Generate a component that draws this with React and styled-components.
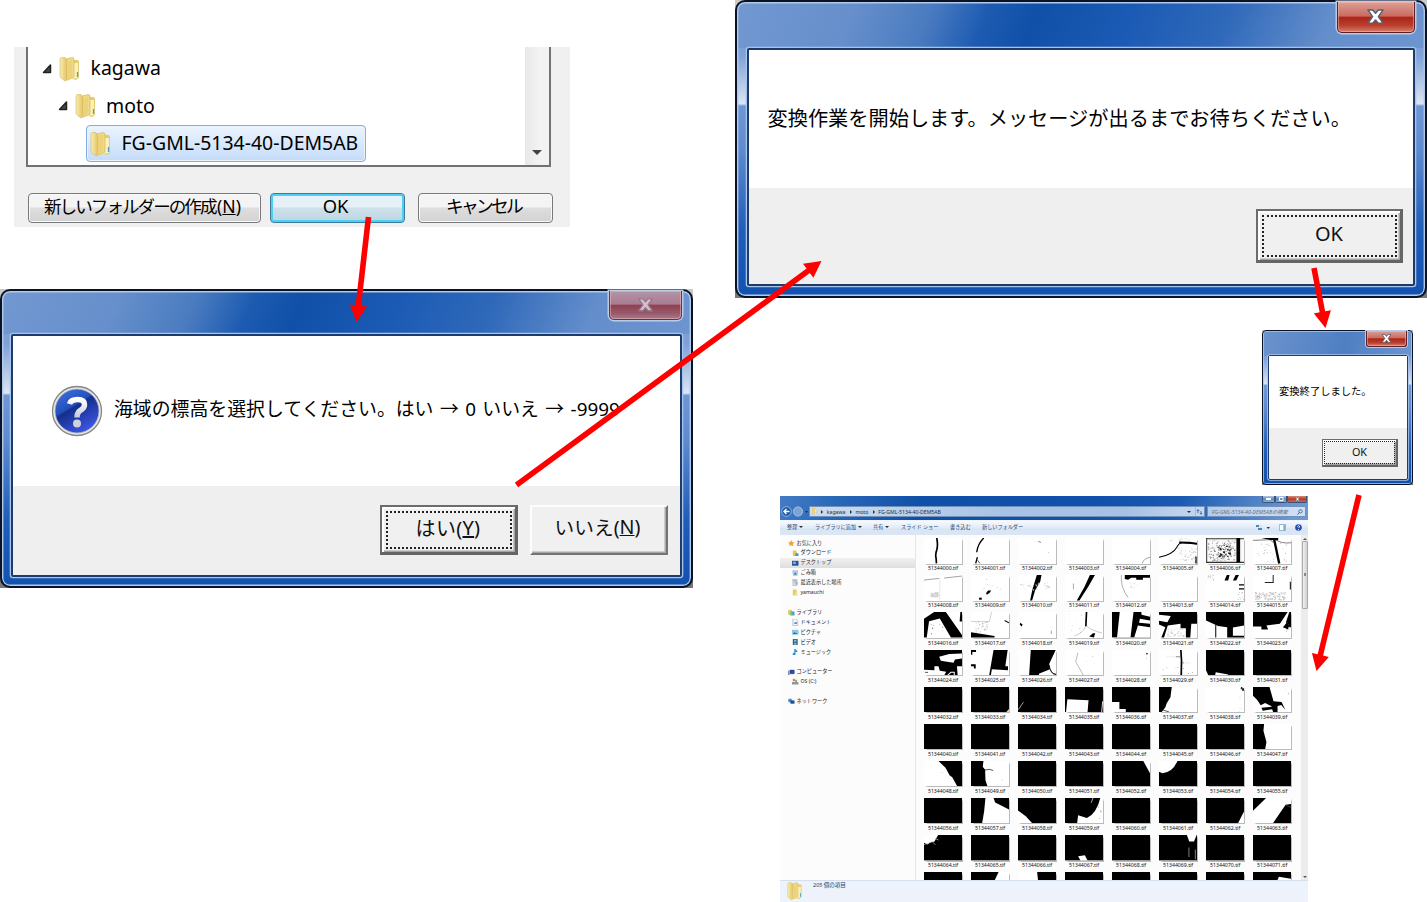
import React from "react";
import styled, { createGlobalStyle, css } from "styled-components";

const ui = `"Noto Sans", "Noto Sans CJK JP", sans-serif`;
const jp = `"Noto Sans CJK JP", sans-serif`;

const Global = createGlobalStyle`
  *, *::before, *::after { box-sizing: border-box; }
  html, body { margin: 0; background: #fff; }
  body { font-family: ${ui}; color: #000; overflow: hidden; }
`;

const Canvas = styled.main`
  position: relative;
  width: 1427px;
  height: 902px;
  overflow: hidden;
  background: #fff;
`;

/* ---------- folder picker ---------- */

const Picker = styled.section`
  position: absolute;
  left: 14px;
  top: 47px;
  width: 556px;
  height: 180px;
  padding-left: 12px;
  background: #f0f0f0;
`;

const Tree = styled.div`
  display: flex;
  width: 525px;
  height: 120px;
  border: 1.6px solid #6f7277;
  border-width: 0 2px 2px;
  background: #fff;
`;

const TreeRows = styled.div`
  flex: 1;
  padding-top: 3px;
`;

const TreeRow = styled.div`
  display: flex;
  align-items: center;
  width: max-content;
  height: 37.5px;
  margin-left: ${(p) => p.$indent}px;
  font-size: 19.45px;
  line-height: 36px;
  white-space: pre;
`;

const SelectedRow = styled(TreeRow)`
  width: 280px;
  height: 37px;
  padding-left: 3px;
  border: 1.5px solid #84ace0;
  border-radius: 4px;
  background: linear-gradient(#ecf4fe, #c4dcfa);
  box-shadow: inset 0 0 0 1px #e9f2fd;
`;

const RowLabel = styled.span`
  margin-left: ${(p) => p.$gap}px;
  margin-top: -1px;
`;

const RowIcon = styled.span`
  display: flex;
  margin-left: 6px;
`;

const TreeScroll = styled.div`
  display: flex;
  align-items: flex-end;
  justify-content: center;
  width: 24px;
  padding-bottom: 10px;
  background: linear-gradient(90deg, #e8e8e8, #f3f3f3 60%);
`;

const PickerButtons = styled.div`
  display: flex;
  padding: 26px 0 0 2px;
`;

const PickerButton = styled.button`
  display: flex;
  align-items: center;
  justify-content: center;
  width: ${(p) => p.$w}px;
  height: 29.5px;
  margin-right: ${(p) => p.$after || 0}px;
  padding: 0 4px 3px 0;
  border: 1.6px solid #77797c;
  border-radius: 4px;
  background: linear-gradient(#f4f4f4 0 46%, #dedede 50%, #d2d2d2);
  box-shadow: inset 0 0 0 1px #fafafa;
  font: ${(p) => p.$size || 18}px ${ui};
  line-height: 20px;
  letter-spacing: ${(p) => p.$track || 0}px;
  white-space: nowrap;
  color: #000;
  ${(p) =>
    p.$primary &&
    css`
      border-color: #3d7a9c;
      background: linear-gradient(#e6f1f7 0 46%, #cfe1ea 50%, #bcd6e3);
      box-shadow: inset 0 0 0 2px #4ed0f5;
    `}
`;

const AccessKey = styled.span`
  margin-left: 1.5px;
  letter-spacing: 0;
`;

/* ---------- message windows ---------- */

const Backdrop = styled.section`
  position: absolute;
  left: ${(p) => p.$x}px;
  top: ${(p) => p.$y}px;
  width: ${(p) => p.$w}px;
  height: ${(p) => p.$h}px;
  background: linear-gradient(#c9cccb, #777 50%);
`;

const Frame = styled.div`
  display: flex;
  flex-direction: column;
  width: 100%;
  height: 100%;
  padding: 0 ${(p) => p.$pad}px ${(p) => p.$pad}px;
  border: ${(p) => (p.$small ? 1 : 2)}px solid #0a1326;
  border-radius: ${(p) => (p.$small ? 4 : 10)}px;
  box-shadow: inset 0 0 0 ${(p) => (p.$small ? 0.8 : 1.4)}px #b3c9ea;
  background:
    ${(p) =>
      p.$small
        ? "linear-gradient(105deg, #6c93cd, #4f7fc2 55%, #6d95cf)"
        : "linear-gradient(112deg, #7298d1 0, #668fcb 17%, #4a7bc0 28%, #1d5bb1 36%, #1050a8 43%, #1c5bb5 57%, #2e68b9 70%, #648ecb 85%, #6d95d0)"}
      top / 100% ${(p) => p.$head}px no-repeat,
    linear-gradient(#7199d4 0, #7ea1d8 18%, #dbe5f5 34.6%, #6f97d6 35.4%, #5f8bd0 50%, #1e5db8 78%, #1251ae);
`;

const Header = styled.header`
  display: flex;
  justify-content: flex-end;
  height: ${(p) => p.$h}px;
`;

const CloseButton = styled.div`
  display: flex;
  align-items: center;
  justify-content: center;
  width: ${(p) => p.$w}px;
  height: ${(p) => p.$h}px;
  margin-right: ${(p) => p.$shift || 0}px;
  border: ${(p) => p.$line || 1.5}px solid #5d1e24;
  border-top: 0;
  border-radius: 0 0 ${(p) => p.$r}px ${(p) => p.$r}px;
  box-shadow: 0 0 0 ${(p) => p.$line || 1.5}px #b9cbe6, inset 0 0 0 1px rgba(255, 200, 190, 0.45);
  background: linear-gradient(#dca096, #c96c60 46%, #ad2416 52%, #b8402f 78%, #d77e6b);
  ${(p) =>
    p.$faded &&
    css`
      border-color: #5f3848;
      background: linear-gradient(#b493a6, #aa7d92 46%, #90404f 52%, #97586a 78%, #a87a8e);
    `}
`;

const Client = styled.div`
  display: flex;
  flex: 1;
  flex-direction: column;
  border: ${(p) => (p.$small ? 1 : 2)}px solid #1d3c6c;
  border-radius: 2px;
  box-shadow: 0 0 0 ${(p) => (p.$small ? 0.8 : 1.3)}px #a9c4ea;
  background: #efefef;
`;

const Body = styled.div`
  display: flex;
  align-items: center;
  height: ${(p) => p.$h}px;
  padding-left: ${(p) => p.$left}px;
  background: #fff;
`;

const Message = styled.p`
  margin: ${(p) => p.$top || 0}px 0 0 ${(p) => p.$left || 0}px;
  font-family: ${(p) => (p.$mixed ? ui : jp)};
  font-size: ${(p) => p.$size}px;
  line-height: 1.4;
  word-spacing: ${(p) => (p.$mixed ? 1.5 : 0)}px;
  white-space: pre;
`;

const Footer = styled.footer`
  display: flex;
  justify-content: flex-end;
  gap: 12px;
  padding: ${(p) => p.$pad};
`;

const ClassicButton = styled.button`
  display: flex;
  width: ${(p) => p.$w}px;
  height: ${(p) => p.$h}px;
  padding: ${(p) => (p.$small ? 1 : 3.5)}px;
  border-style: solid;
  border-width: ${(p) => (p.$small ? "1px 2px 2px 1px" : p.$focus ? "2px 3.5px 3.5px 2px" : "2px 2.5px 2.5px 2px")};
  border-color: ${(p) => (p.$focus ? "#6c6c6c #656565 #656565 #6c6c6c" : "#fdfdfd #747474 #747474 #fdfdfd")};
  background: #f0f0f0;
  box-shadow: ${(p) => (p.$focus ? "inset 2px 2px 0 #fff, inset -1.5px -1.5px 0 #a3a3a3" : "inset -1.5px -1.5px 0 #a8a8a8")};
  font: ${(p) => p.$size}px ${ui};
  letter-spacing: ${(p) => p.$track || 0}px;
  color: #111;
`;

const Focus = styled.span`
  display: flex;
  flex: 1;
  align-items: center;
  justify-content: center;
  align-self: stretch;
  padding: 0 ${(p) => p.$nudge || 0}px ${(p) => p.$lift}px 0;
  border: ${(p) => (p.$on ? (p.$small ? "1px" : "2px") : "0")} dotted #222;
  white-space: nowrap;
`;

/* ---------- explorer ---------- */

const Explorer = styled.section`
  position: absolute;
  left: 780px;
  top: 496px;
  display: flex;
  flex-direction: column;
  width: 528px;
  height: 406px;
  overflow: hidden;
  background: #fcfcfc;
`;

const ExplorerTop = styled.header`
  height: 23.5px;
  background: linear-gradient(108deg, #447cc3 0, #2a69b8 10%, #0f4fa7 27%, #1151aa 60%, #1a5ab3 75%, #6f98d0 97%);
`;

const WindowButtons = styled.div`
  display: flex;
  justify-content: flex-end;
  height: 9.5px;
  padding-right: 1px;
`;

const WindowButton = styled.span`
  display: flex;
  align-items: center;
  justify-content: center;
  width: ${(p) => p.$w}px;
  height: 7px;
  border: 0.5px solid #39537a;
  border-top: 0;
  border-radius: 0 0 2px 2px;
  background: ${(p) =>
    p.$red ? "linear-gradient(#d68d80, #b83a28 50%, #c86552)" : "linear-gradient(#b4c9e6, #5f86be 50%, #8faedb)"};
`;

const AddressRow = styled.div`
  display: flex;
  align-items: center;
  height: 12px;
  padding-left: 1px;
`;

const NavIcons = styled.div`
  display: flex;
  align-items: center;
  width: 28px;
`;

const AddressBar = styled.div`
  display: flex;
  align-items: center;
  width: 396px;
  height: 10.5px;
  border: 0.6px solid #7191bd;
  background: linear-gradient(90deg, #cddcf0, #a7c2e6 50%, #a6c1e5 80%, #c6d8ef);
  font-size: 5.15px;
  line-height: 8px;
  color: #1c2b44;
`;

const Crumb = styled.span`
  margin-left: ${(p) => p.$gap}px;
  white-space: nowrap;
`;

const Tri = styled.i`
  width: 0;
  height: 0;
  margin-left: ${(p) => p.$gap || 0}px;
  border: ${(p) => p.$s || 2}px solid transparent;
  ${(p) =>
    p.$down
      ? css`border-top-color: ${p.$c || "#233"}; border-bottom: 0;`
      : p.$up
      ? css`border-bottom-color: ${p.$c || "#233"}; border-top: 0;`
      : css`border-left-color: #233; border-right: 0;`}
`;

const AddressTail = styled.div`
  display: flex;
  align-items: center;
  gap: 4px;
  margin-left: auto;
  padding-right: 1px;
`;

const SearchBox = styled.div`
  display: flex;
  align-items: center;
  justify-content: space-between;
  width: 99px;
  height: 10.5px;
  margin-left: 2px;
  padding: 0 2px 0 4px;
  border: 0.6px solid #6f91bf;
  background: linear-gradient(90deg, #b4cbe9, #d2e0f3);
  font-size: 5.25px;
  font-style: italic;
  line-height: 8px;
  color: #5e7187;
  white-space: nowrap;
`;

const Toolbar = styled.nav`
  display: flex;
  align-items: center;
  height: 15px;
  padding-left: 7px;
  padding-bottom: 1px;
  border-top: 1px solid #eff5fd;
  background: linear-gradient(#f7fafe, #e3ecf8 45%, #d9e5f4 55%, #dbe6f5);
  font-size: 5.15px;
  color: #26456f;
`;

const ToolItem = styled.span`
  display: flex;
  align-items: center;
  gap: 2px;
  width: ${(p) => p.$w}px;
  line-height: 8px;
  white-space: pre;
`;

const ToolIcons = styled.div`
  display: flex;
  align-items: center;
  margin-left: auto;
  padding-right: 6px;
  gap: 9px;
`;

const ExplorerBody = styled.div`
  display: flex;
  flex: 1;
  min-height: 0;
`;

const Sidebar = styled.aside`
  width: 135.5px;
  padding-top: 3.6px;
  border-right: 1px solid #dde8f6;
`;

const SideItem = styled.div`
  display: flex;
  align-items: center;
  gap: 2px;
  height: 9.92px;
  padding-left: ${(p) => (p.$child ? 12 : 8)}px;
  font-size: 5.15px;
  line-height: 9px;
  color: #1d1d26;
  white-space: nowrap;
  background: ${(p) => (p.$active ? "linear-gradient(#f1f1f1, #dedede)" : "none")};
`;

const Files = styled.div`
  display: grid;
  flex: 1;
  grid-template-columns: repeat(8, 47.02px);
  grid-auto-rows: 37.13px;
  align-content: start;
  padding: 3.7px 0 0 4px;
  overflow: hidden;
`;

const FileCell = styled.figure`
  display: flex;
  flex-direction: column;
  align-items: center;
  margin: 0;
`;

const Picture = styled.svg`
  display: block;
  width: 38px;
  height: 25.4px;
  flex: none;
  background: #fff;
  box-shadow: 0.5px 0.5px 1px #bbb;
`;

const Caption = styled.figcaption`
  margin-top: 0.7px;
  font-size: 5.2px;
  line-height: 8px;
  color: #111;
`;

const Scrollbar = styled.div`
  display: flex;
  flex-direction: column;
  align-items: center;
  width: 7px;
  padding: 3px 0 2px;
  background: #ececec;
`;

const Thumb = styled.div`
  display: flex;
  align-items: center;
  justify-content: center;
  width: 6px;
  height: 68px;
  margin: 1px 0 auto;
  border: 0.6px solid #a9a9a9;
  border-radius: 1px;
  background: linear-gradient(90deg, #f3f3f3, #cfcfcf);
`;

const Grip = styled.i`
  width: 2px;
  height: 3px;
  background: #888;
`;

const StatusBar = styled.footer`
  display: flex;
  height: 22px;
  padding: 0 0 0 7px;
  border-top: 1px solid #d5e0ef;
  background: #edf2fb;
  font-size: 5.5px;
  line-height: 9px;
  color: #26415f;
`;

const StatusText = styled.span`
  margin-left: 10px;
`;

/* ---------- drawings ---------- */

const Arrows = styled.svg`
  position: absolute;
  inset: 0;
  pointer-events: none;
`;

const Folder = ({ w = 22, h = 26 }) => (
  <svg width={w} height={h} viewBox="0 0 22 26">
    <defs>
      <linearGradient id="fo" x1="0" x2="1">
        <stop offset="0" stopColor="#f9efb4" />
        <stop offset="1" stopColor="#e2c260" />
      </linearGradient>
    </defs>
    <path d="M10 4 L18 4 Q20 4 20 6 V22 L17 24 L9 22Z" fill="#e6cc70" />
    <path d="M12 7 H19 V22 L12 23Z" fill="#faf1bd" />
    <path d="M18.500 16 V21" stroke="#46a6c8" strokeWidth="1.3" />
    <path d="M7 3 L13 1.500 Q15 1.500 15 3 V21 L9 24Z" fill="#efda8a" stroke="#d2b24e" strokeWidth=".6" />
    <path d="M1 3 Q1 1.500 3 1.500 H6 L8 5 V22 Q8 25 6 25 L2 22 Q1 21 1 20Z" fill="url(#fo)" stroke="#d5b75c" strokeWidth=".6" />
    <path d="M8 6 L13 3 V21 L8 25Z" fill="#ecd37a" />
  </svg>
);

const Expander = () => (
  <svg width="12" height="12" viewBox="0 0 12 12">
    <path d="M9.500 2 V9.500 H2.500Z" fill="#484848" stroke="#202020" strokeWidth="1.5" strokeLinejoin="round" />
  </svg>
);

const CloseMark = ({ w, faded }) => (
  <svg width={w} height={w * 0.8} viewBox="0 0 20 16">
    <path
      d="M2 1 H7 L10 4.500 L13 1 H18 L13 8 L18 15 H13 L10 11.500 L7 15 H2 L7 8Z"
      fill={faded ? "#d8bec8" : "#fff"}
      stroke={faded ? "#93788d" : "#57606f"}
      strokeWidth="1.5"
      strokeLinejoin="round"
    />
  </svg>
);

const QuestionIcon = () => (
  <svg width="52" height="52" viewBox="0 0 52 52">
    <defs>
      <linearGradient id="qb" x1="0" y1="0" x2=".6" y2="1">
        <stop offset="0" stopColor="#3f76e2" />
        <stop offset=".45" stopColor="#2450bd" />
        <stop offset=".5" stopColor="#132f8c" />
        <stop offset="1" stopColor="#3c55e0" />
      </linearGradient>
      <linearGradient id="qw" x1="0" y1="0" x2="0" y2="1">
        <stop offset="0" stopColor="#fff" />
        <stop offset="1" stopColor="#c8cbd8" />
      </linearGradient>
    </defs>
    <circle cx="26" cy="26" r="24.500" fill="#e9e9ea" stroke="#858585" strokeWidth="1.300" />
    <circle cx="26" cy="26" r="22" fill="url(#qb)" stroke="#b3b5bb" strokeWidth=".8" />
    <path d="M18.500 19 Q20 14.500 26.500 14.500 Q33.500 14.500 33.500 19.500 Q33.500 23 30 25 Q26 27 26 32.500" fill="none" stroke="url(#qw)" strokeWidth="5.500" />
    <circle cx="26" cy="38.500" r="4" fill="#cfd2de" />
  </svg>
);

const SmallIcon = ({ kind }) => {
  const art = {
    star: <path d="M4 0 L5.200 2.600 L8 3 L6 5 L6.500 8 L4 6.500 L1.500 8 L2 5 L0 3 L2.800 2.600Z" fill="#f2a33a" />,
    folder: <><path d="M1 .5 H5 L6 2 V8 H1Z" fill="#e9cc62" /><path d="M5 3 H7 V8 H4Z" fill="#f7e7a2" /></>,
    down: <><path d="M1 .5 H5 L6 2 V8 H1Z" fill="#e5c75e" /><path d="M4 4 H8 V8 H4Z" fill="#3f9bd6" /></>,
    desktop: <><path d="M0 1 H8 V7 H0Z" fill="#28528f" /><path d="M1 2 H5 V5 H1Z" fill="#68aaf0" /></>,
    bin: <><path d="M1 1 H7 L6 8 H2Z" fill="#c5dbea" stroke="#6d91aa" strokeWidth=".6" /><circle cx="4" cy="4.500" r="1.500" fill="#3986cf" /></>,
    recent: <><path d="M1 0 H6 V8 H1Z" fill="#d3dfe9" stroke="#8195a8" strokeWidth=".5" /><path d="M2 2 H5 M3 4 H7 M4 6 H7.500" stroke="#7391a6" strokeWidth=".8" /></>,
    library: <><path d="M0 1 H5 V7 H0Z" fill="#e6cf69" /><path d="M3 3 H8 V8 H3Z" fill="#4da4ca" /><path d="M2 4 H5 V7 H2Z" fill="#94c45c" /></>,
    doc: <><path d="M1 0 H5 L7 2 V8 H1Z" fill="#f2f5f9" stroke="#8798ad" strokeWidth=".6" /><path d="M3 4 H6 V6 H3Z" fill="#4977ad" /></>,
    picture: <><path d="M0 1 H8 V7 H0Z" fill="#8cc6ea" /><path d="M1 6 L3 4 L7 6Z" fill="#276986" /></>,
    video: <><path d="M1 0 H7 V8 H1Z" fill="#345e7b" /><path d="M2.500 1 H5.500 V3.500 H2.500Z M2.500 4.500 H5.500 V7 H2.500Z" fill="#7bb9db" /></>,
    music: <><path d="M3.500 6 V0 Q4 2 6.500 3" fill="none" stroke="#2d8ed6" strokeWidth="1.400" /><circle cx="2.500" cy="6.300" r="1.700" fill="#2d8ed6" /></>,
    computer: <><path d="M2 1 H8 V6 H2Z" fill="#2548a1" /><path d="M0 2 H2 V8 H0Z M3 7 H7 V8 H3Z" fill="#8190a4" /></>,
    drive: <><path d="M0 5 H8 V8 H0Z" fill="#8b969b" /><path d="M1 1 H3.500 V4 H1Z" fill="#d97838" /><path d="M4 2 H6 V5 H4Z" fill="#63a344" /></>,
    network: <><circle cx="2.500" cy="3" r="2.400" fill="#339dc2" /><path d="M3 3 H8 V7 H3Z" fill="#28459d" /></>,
  };
  return <svg width="6.500" height="6.500" viewBox="0 0 8 8">{art[kind]}</svg>;
};

const dots = (seed, n, x0, y0, w, h, shade = "#888", size = 2) => {
  let s = seed * 7919;
  const rnd = () => {
    s = (s * 16807) % 2147483647;
    return s / 2147483647;
  };
  let d = "";
  for (let i = 0; i < n; i++) {
    const x = x0 + rnd() * w;
    const y = y0 + rnd() * h;
    const k = size * (0.5 + rnd());
    d += `M${x.toFixed(1)} ${y.toFixed(1)}h${k.toFixed(1)}v${(k * 0.8).toFixed(1)}h-${k.toFixed(1)}z`;
  }
  return { f: shade, d };
};

const K = "#000";
const W = "#fff";
const fill = (d, f = K) => ({ f, d });
const line = (d, w = 2, s = K) => ({ s, w, d });

/* Terrain previews on a 113 x 75 grid; tiles that are missing here are solid black. */
const tiles = {
  0: [W, line("M38 0 Q42 22 38 35 Q33 48 36 60 L37 75", 5)],
  1: [W, line("M38 0 Q20 17 17 42", 4), line("M19 57 L14 75", 4), line("M20 66 L26 75", 2)],
  2: [W, line("M60 10 L68 13", 3, "#888"), dots(9, 2, 85, 35, 8, 8, "#bbb")],
  3: [W],
  4: [W, line("M90 75 Q94 60 113 57", 2, "#777")],
  5: [W, line("M0 57 Q42 48 53 27 Q62 10 76 14 L113 17", 3), line("M60 13 L90 14 L113 17", 6), line("M110 55 V75", 4), dots(55, 60, 55, 25, 55, 48, "#aaa"), dots(56, 25, 30, 0, 60, 8, "#ccc")],
  6: ["#fafafa", line("M2 0 V72 M0 2 H113 M0 72 H113", 3, "#333"), line("M96 0 V72", 11), dots(61, 150, 5, 6, 82, 62, "#999", 3), dots(63, 28, 33, 20, 42, 34, "#222", 4), dots(64, 30, 5, 6, 82, 62, "#555", 2.500)],
  7: [W, line("M62 0 L78 75", 7), line("M0 7 L50 5 L64 15 M64 3 Q85 18 113 14", 2, "#444"), fill("M25 0 H75 V7 L52 6Z"), dots(71, 28, 5, 15, 95, 55, "#999")],
  8: [W, line("M0 15 L45 10 M60 9 L113 3", 2, "#777"), line("M47 10 V75", 1, "#bbb"), dots(81, 45, 18, 50, 25, 16, "#ccc", 3)],
  9: [W, fill("M45 53 L51 46 L60 46 L55 53 L47 58Z"), fill("M24 67 H32 V73 H24Z"), dots(91, 9, 5, 5, 100, 50, "#999")],
  10: [W, fill("M56 0 H70 L66 20 L51 45 L42 75 H36 L43 42Z"), dots(101, 30, 5, 20, 90, 25, "#ccc", 3)],
  11: [W, fill("M74 0 H89 L70 33 L43 75 H35 L58 35Z"), line("M25 25 V42", 3, "#aaa")],
  12: [W, fill("M38 0 H113 V8 H92 V14 H72 V8 H57 L48 14 L38 12Z"), line("M28 0 Q24 35 48 67", 2, "#888"), dots(121, 12, 50, 22, 30, 15, "#aaa")],
  13: [W],
  14: [W, fill("M62 0 H70 L66 16 H55Z M88 0 H98 L90 16 H80Z"), line("M98 29 H113 M98 41 H113", 4), dots(141, 16, 3, 0, 18, 14, "#777"), dots(143, 18, 92, 50, 20, 22, "#aaa")],
  15: [W, line("M60 0 V22 H35", 3, "#222"), dots(151, 120, 5, 50, 90, 22, "#bbb", 3), line("M111 20 V43", 3)],
  16: [W, fill("M0 20 L30 0 H65 L113 68 V75 H80 L47 19 L15 27 L8 75 H0Z"), fill("M108 0 H113 V28 H106Z"), dots(161, 8, 20, 35, 35, 30, "#333")],
  17: [W, fill("M0 60 L70 71 V75 H0Z"), line("M0 28 H55 L61 0", 2, "#bbb"), line("M100 25 L113 32", 3), dots(171, 35, 12, 28, 35, 30, "#bbb", 3)],
  18: [W, fill("M7 32 L14 38 L10 43 L5 36Z"), line("M99 55 V65", 3, "#aaa")],
  19: [W, line("M64 0 L62 42", 5), line("M62 42 Q50 65 28 70 M64 42 Q80 55 110 62", 1.5, "#999"), fill("M72 72 L83 63 H90 L86 75Z"), dots(191, 9, 5, 5, 45, 60, "#aaa")],
  20: [K, fill("M23 0 H64 L55 75 H15Z", W), fill("M87 0 H113 V14 L88 8Z M83 20 L113 25 V75 H66 L77 40 L113 45 V36 L80 34Z", W), line("M85 15 L113 21 M80 34 L113 37", 5)],
  21: [W, fill("M0 0 H113 V35 H96 L93 75 H80 V48 H64 V35 L26 40 L15 75 H7 L19 45 L0 37 V26 L25 30 L35 12 L0 8Z"), fill("M0 12 H30 L24 28 L0 24Z", W), dots(211, 40, 22, 48, 50, 24, "#ccc", 3)],
  22: [W, fill("M0 0 H113 V40 L80 46 V70 H113 V75 H63 V45 L36 41 L0 25Z"), line("M29 38 V75", 3)],
  23: [W, fill("M0 0 H103 L80 35 L40 40 L45 52 H25 V43 H0Z"), fill("M108 0 H113 V45 H104 L98 30Z M89 45 L105 26 V52Z"), dots(231, 6, 95, 25, 15, 43, "#555")],
  24: [K, fill("M45 20 L75 12 L113 10 V25 L92 28 L88 38 L50 32Z M0 58 L31 60 V48 H43 L47 61 L66 64 L60 75 H0Z M98 48 H113 V75 H100Z", W), line("M70 75 L80 66 H90 V75", 3, W), line("M3 66 H12", 2)],
  25: [W, fill("M67 0 H109 L102 48 L110 48 V60 L62 57 L59 75 H54Z"), fill("M0 0 H15 V6 H4 V14 H0Z M0 42 H14 V55 H9 L8 48 H0Z")],
  26: [W, fill("M38 0 H112 L92 43 L95 57 L62 70 V75 H33Z"), line("M92 43 Q97 72 113 72", 3)],
  27: [W, line("M38 8 L32 35 L55 75", 2, "#999"), dots(271, 6, 5, 0, 100, 73, "#bbb")],
  28: [W, fill("M101 8 L107 10 L104 15Z"), dots(281, 2, 100, 22, 5, 9, "#999")],
  29: [W, line("M65 0 L67 32 L66 75", 5), line("M50 20 H65 M68 38 H74", 2, "#555"), line("M22 20 H50 M74 38 H95", 1.5, "#ddd"), dots(291, 10, 8, 48, 95, 20, "#999")],
  30: [K, fill("M27 75 L29 66 L66 72 V75Z M0 60 L7 75 H0Z", W)],
  33: [K, fill("M104 75 L113 65 V75Z", "#ddd")],
  34: [K, line("M1 67 L16 45", 2, "#eee")],
  35: [K, fill("M7 36 L70 39 L67 75 H3Z", W), line("M112 42 L109 75", 3, "#ddd")],
  36: [K, fill("M0 44 H22 V65 H41 V75 H0Z", W)],
  37: [W, fill("M0 0 H38 L34 30 L23 48 L19 60 L7 75 H0Z"), line("M10 67 L30 74", 2)],
  38: [W, fill("M104 0 H108 V4 H113 V11 H107 V7 H103Z", "#222"), dots(381, 6, 98, 20, 12, 53, "#aaa")],
  39: [W, fill("M0 0 H49 L61 42 L85 44 L96 67 L84 53 L73 56 V75 H60 L57 66 L29 70 L25 61 L57 58 L36 47 L23 54 L12 38 L0 26Z"), dots(391, 4, 90, 0, 20, 30, "#aaa")],
  47: [W, fill("M0 0 H33 L31 20 L40 53 L36 75 H0Z")],
  48: [W, fill("M43 0 H113 V75 H99 L84 48 L76 42 L64 20Z"), dots(481, 2, 50, 32, 6, 4, "#999")],
  49: [W, fill("M0 0 H37 L35 17 L42 26 L43 57 L49 75 H0Z"), line("M39 27 Q57 22 66 28", 2), dots(491, 1, 90, 55, 3, 3, "#777")],
  52: [K, fill("M93 0 H113 V36 L102 16Z", W)],
  53: [K, fill("M0 0 H55 Q40 34 10 36 L0 32Z", W)],
  57: [K, fill("M43 0 H67 L72 13 L113 34 V75 H33 L39 40Z", W)],
  58: [K, fill("M0 37 L23 54 L43 75 H0Z", W)],
  59: [K, fill("M105 0 H113 V75 H36 L39 51 L65 59 Q93 48 105 0Z", W), line("M83 0 L78 14", 2, W), dots(591, 4, 95, 15, 12, 55, "#333")],
  62: [K, fill("M113 40 V75 H95Z", W)],
  63: [K, fill("M39 0 H113 V18 L97 20 L59 75 H0 V38Z", W), line("M98 21 L113 28", 2, "#555")],
  64: [K, fill("M0 0 H42 L31 19 L17 23 L10 28 L0 23Z", W), line("M0 28 L20 22 M23 18 L34 29 M32 10 L44 15", 2, "#bbb")],
  67: [K, fill("M39 63 L59 60 L67 75 H46Z", W)],
  69: [K, fill("M83 0 H112 L104 19 H90Z", W), line("M89 37 V65 M108 43 V72", 2, "#bbb")],
  73: [K, fill("M82 0 H113 V30 H68Z", W)],
  74: [K, fill("M0 0 H57 L60 30 H0Z", W)],
  79: [K, fill("M77 14 L113 20 V30 H70Z", W)],
};

const Tile = ({ n }) => {
  const [bg, ...shapes] = tiles[n] || [K];
  return (
    <Picture viewBox="0 0 113 75" preserveAspectRatio="none">
      <rect width="113" height="75" fill={bg} />
      {shapes.map((s, i) =>
        s.f ? (
          <path key={i} d={s.d} fill={s.f} />
        ) : (
          <path key={i} d={s.d} fill="none" stroke={s.s} strokeWidth={s.w} />
        )
      )}
    </Picture>
  );
};

const places = [
  ["star", "お気に入り", 0],
  ["down", "ダウンロード", 1],
  ["desktop", "デスクトップ", 1, true],
  ["bin", "ごみ箱", 1],
  ["recent", "最近表示した場所", 1],
  ["folder", "yamauchi", 1],
  null,
  ["library", "ライブラリ", 0],
  ["doc", "ドキュメント", 1],
  ["picture", "ピクチャ", 1],
  ["video", "ビデオ", 1],
  ["music", "ミュージック", 1],
  null,
  ["computer", "コンピューター", 0],
  ["drive", "OS (C:)", 1],
  null,
  ["network", "ネットワーク", 0],
];

const arrows = [
  [368.5, 217, 356.5, 322],
  [516.5, 485, 821.5, 261],
  [1314, 268, 1325.5, 328],
  [1359, 495, 1316.5, 671],
];

const Arrow = ({ from: [x1, y1, x2, y2] }) => {
  const len = Math.hypot(x2 - x1, y2 - y1);
  const angle = (Math.atan2(y2 - y1, x2 - x1) * 180) / Math.PI;
  return (
    <path
      transform={`translate(${x1} ${y1}) rotate(${angle})`}
      d={`M0 -2.800 H${len - 16.5} V-8.700 L${len} 0 L${len - 16.5} 8.700 V2.800 H0Z`}
      fill="#fe0000"
    />
  );
};

const FolderPicker = () => (
  <Picker>
    <Tree>
      <TreeRows>
        <TreeRow $indent={12.5}>
          <Expander />
          <RowIcon><Folder /></RowIcon>
          <RowLabel $gap={10}>kagawa</RowLabel>
        </TreeRow>
        <TreeRow $indent={28.5}>
          <Expander />
          <RowIcon><Folder /></RowIcon>
          <RowLabel $gap={9.5}>moto</RowLabel>
        </TreeRow>
        <SelectedRow $indent={57.5}>
          <Folder />
          <RowLabel $gap={10}>FG-GML-5134-40-DEM5AB</RowLabel>
        </SelectedRow>
      </TreeRows>
      <TreeScroll><Tri $down $s={5.5} $c="#444" /></TreeScroll>
    </Tree>
    <PickerButtons>
      <PickerButton $w={233} $after={9} $size={17.6} $track={-2}>
        <span>新しいフォルダーの作成<AccessKey>(<u>N</u>)</AccessKey></span>
      </PickerButton>
      <PickerButton $w={135} $after={13} $primary $size={18.4}>OK</PickerButton>
      <PickerButton $w={135} $size={17.8} $track={-2.8}>キャンセル</PickerButton>
    </PickerButtons>
  </Picker>
);

const ExplorerWindow = () => (
  <Explorer>
    <ExplorerTop>
      <WindowButtons>
        <WindowButton $w={13}><svg width="5" height="2"><path d="M0 0H5V2H0Z" fill="#fff" /></svg></WindowButton>
        <WindowButton $w={12}><svg width="5" height="4"><path d="M.500 .500H4V3.500H.500Z" fill="none" stroke="#fff" /></svg></WindowButton>
        <WindowButton $w={20} $red><CloseMark w={5} /></WindowButton>
      </WindowButtons>
      <AddressRow>
        <NavIcons>
          <svg width="28" height="11" viewBox="0 0 28 11">
            <circle cx="5.500" cy="5.500" r="4.800" fill="#1d59aa" stroke="#c0d4ec" strokeWidth=".7" />
            <path d="M8.500 5.500 H3 M5.500 3 L3 5.500 L5.500 8" fill="none" stroke="#fff" strokeWidth="1.400" />
            <circle cx="17" cy="5.500" r="4.600" fill="#7ea3d2" stroke="#b6cce8" strokeWidth=".8" />
            <path d="M24 5 H27 L25.500 7Z" fill="#163563" />
          </svg>
        </NavIcons>
        <AddressBar>
          <Crumb $gap={1}><Folder w={6} h={8} /></Crumb>
          <Tri $gap={4} />
          <Crumb $gap={3.8} >kagawa</Crumb>
          <Tri $gap={4.4} />
          <Crumb $gap={3.6}>moto</Crumb>
          <Tri $gap={4.4} />
          <Crumb $gap={3.6}>FG-GML-5134-40-DEM5AB</Crumb>
          <AddressTail>
            <Tri $down />
            <svg width="8" height="9" viewBox="0 0 8 9">
              <path d="M0 0V9" stroke="#7696c2" strokeWidth=".8" />
              <path d="M3 6 V3 M1.800 4 L3 2.500 L4.200 4 M6 4 V7 M4.800 6 L6 7.300 L7.200 6" fill="none" stroke="#235aa6" strokeWidth=".8" />
            </svg>
          </AddressTail>
        </AddressBar>
        <SearchBox>
          FG-GML-5134-40-DEM5ABの検索
          <svg width="6" height="6" viewBox="0 0 6 6">
            <circle cx="3.500" cy="2.300" r="1.700" fill="none" stroke="#2761a8" strokeWidth=".8" />
            <path d="M2.300 3.500 L.5 5.500" stroke="#2761a8" />
          </svg>
        </SearchBox>
      </AddressRow>
    </ExplorerTop>
    <Toolbar>
      <ToolItem $w={28}>整理<Tri $down /></ToolItem>
      <ToolItem $w={58}>ライブラリに追加<Tri $down /></ToolItem>
      <ToolItem $w={28}>共有<Tri $down /></ToolItem>
      <ToolItem $w={49}>スライド ショー</ToolItem>
      <ToolItem $w={32}>書き込む</ToolItem>
      <ToolItem $w={45}>新しいフォルダー</ToolItem>
      <ToolIcons>
        <svg width="14" height="7" viewBox="0 0 14 7">
          <path d="M0 1H6V6H0Z" fill="#d5e8f3" /><path d="M0 1H3V3H0Z M2 4H6V6H2Z" fill="#488aaf" /><path d="M10.500 3H14L12.200 5Z" fill="#233b60" />
        </svg>
        <svg width="7" height="7" viewBox="0 0 7 7">
          <path d="M.4 .5H6.600V6.500H.4Z" fill="#fff" stroke="#7299c2" strokeWidth=".7" /><path d="M4.300 1H6.500V6H4.300Z" fill="#70b7e2" />
        </svg>
        <svg width="7" height="7" viewBox="0 0 7 7">
          <circle cx="3.500" cy="3.500" r="3.300" fill="#294fae" /><path d="M2.300 2.500 Q3.500 .8 4.600 2.400 Q4.600 3.200 3.500 4 M3.500 5 V5.800" fill="none" stroke="#fff" strokeWidth=".9" />
        </svg>
      </ToolIcons>
    </Toolbar>
    <ExplorerBody>
      <Sidebar>
        {places.map((p, i) =>
          p ? (
            <SideItem key={i} $child={p[2]} $active={p[3]}>
              <SmallIcon kind={p[0]} />
              {p[1]}
            </SideItem>
          ) : (
            <SideItem key={i} />
          )
        )}
      </Sidebar>
      <Files>
        {Array.from({ length: 80 }, (_, n) => (
          <FileCell key={n}>
            <Tile n={n} />
            {n < 72 && <Caption>{51344000 + n}.tif</Caption>}
          </FileCell>
        ))}
      </Files>
      <Scrollbar>
        <Tri $up $c="#555" />
        <Thumb><Grip /></Thumb>
        <Tri $down $c="#555" />
      </Scrollbar>
    </ExplorerBody>
    <StatusBar>
      <Folder w={16} h={20} />
      <StatusText>205 個の項目</StatusText>
    </StatusBar>
  </Explorer>
);

export default function App() {
  return (
    <Canvas>
      <Global />
      <FolderPicker />

      <Backdrop $x={0} $y={289} $w={693} $h={299}>
        <Frame $pad={9} $head={43}>
          <Header $h={43}>
            <CloseButton $w={73} $h={29} $r={5} $shift={0.5} $faded><CloseMark w={17} faded /></CloseButton>
          </Header>
          <Client>
            <Body $h={150} $left={37.5}>
              <QuestionIcon />
              <Message $size={18.87} $left={11.5} $top={-3} $mixed>
                海域の標高を選択してください。はい → 0 いいえ → -9999
              </Message>
            </Body>
            <Footer $pad="19px 12px 0 0">
              <ClassicButton $w={138} $h={50} $size={20} $track={0.3} $focus>
                <Focus $on $lift={4} $nudge={1}>はい(<u>Y</u>)</Focus>
              </ClassicButton>
              <ClassicButton $w={138} $h={50} $size={19.7}>
                <Focus $lift={7} $nudge={3}>いいえ(<u>N</u>)</Focus>
              </ClassicButton>
            </Footer>
          </Client>
        </Frame>
      </Backdrop>

      <Backdrop $x={735} $y={0} $w={692} $h={298}>
        <Frame $pad={10} $head={46}>
          <Header $h={46}>
            <CloseButton $w={78} $h={31} $r={5} $shift={0.5}><CloseMark w={19} /></CloseButton>
          </Header>
          <Client>
            <Body $h={138} $left={18.5}>
              <Message $size={20.22} $top={-1}>
                変換作業を開始します。メッセージが出るまでお待ちください。
              </Message>
            </Body>
            <Footer $pad="21px 10px 0 0">
              <ClassicButton $w={147} $h={54} $size={20} $focus>
                <Focus $on $lift={4}>OK</Focus>
              </ClassicButton>
            </Footer>
          </Client>
        </Frame>
      </Backdrop>

      <Backdrop $x={1262} $y={330} $w={151} $h={155}>
        <Frame $small $pad={4.5} $head={25}>
          <Header $h={24}>
            <CloseButton $w={41} $h={16} $r={3} $line={1} $shift={1}><CloseMark w={11} /></CloseButton>
          </Header>
          <Client $small>
            <Body $h={72} $left={10.5}>
              <Message $size={10.3} $top={-2}>変換終了しました。</Message>
            </Body>
            <Footer $pad="11px 8.500px 0 0">
              <ClassicButton $small $w={76} $h={28} $size={10.8} $focus>
                <Focus $on $small $lift={2}>OK</Focus>
              </ClassicButton>
            </Footer>
          </Client>
        </Frame>
      </Backdrop>

      <ExplorerWindow />

      <Arrows width="1427" height="902">
        {arrows.map((a) => (
          <Arrow key={a[0]} from={a} />
        ))}
      </Arrows>
    </Canvas>
  );
}
